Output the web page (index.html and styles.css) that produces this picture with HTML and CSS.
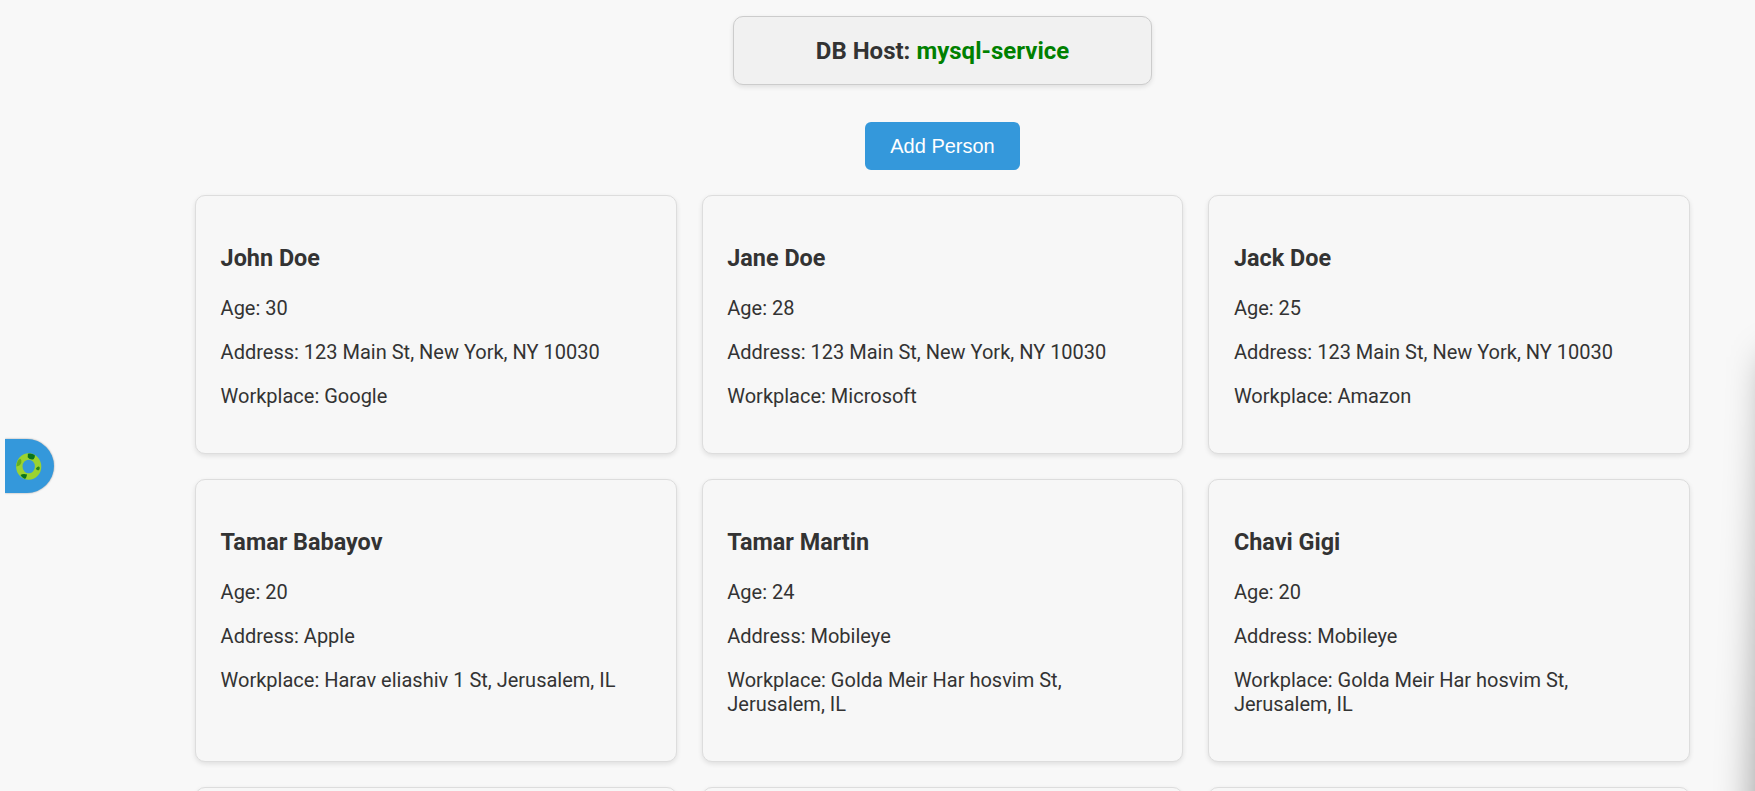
FILE: index.html
```html
<!DOCTYPE html>
<html lang="en">
<head>
<meta charset="utf-8">
<title>People</title>
<link rel="stylesheet" href="styles.css">
</head>
<body>
<main class="page">
  <div class="db-host">DB Host: <span class="db-name">mysql-service</span></div>
  <button class="add-button" type="button">Add Person</button>
  <section class="people">
    <article class="card"><h3>John Doe</h3><p>Age: 30</p><p>Address: 123 Main St, New York, NY 10030</p><p>Workplace: Google</p></article>
    <article class="card"><h3>Jane Doe</h3><p>Age: 28</p><p>Address: 123 Main St, New York, NY 10030</p><p>Workplace: Microsoft</p></article>
    <article class="card"><h3>Jack Doe</h3><p>Age: 25</p><p>Address: 123 Main St, New York, NY 10030</p><p>Workplace: Amazon</p></article>
    <article class="card"><h3>Tamar Babayov</h3><p>Age: 20</p><p>Address: Apple</p><p>Workplace: Harav eliashiv 1 St, Jerusalem, IL</p></article>
    <article class="card"><h3>Tamar Martin</h3><p>Age: 24</p><p>Address: Mobileye</p><p>Workplace: Golda Meir Har hosvim St, Jerusalem, IL</p></article>
    <article class="card"><h3>Chavi Gigi</h3><p>Age: 20</p><p>Address: Mobileye</p><p>Workplace: Golda Meir Har hosvim St, Jerusalem, IL</p></article>
    <article class="card"></article>
    <article class="card"></article>
    <article class="card"></article>
  </section>
</main>
<div class="side-tab">
  <svg width="28" height="28" viewBox="0.300 0.500 28 28">
    <ellipse cx="14" cy="14" rx="9.400" ry="10" fill="none" stroke="#9bd331" stroke-width="6.400"/>
    <path d="M13.200 1.200q4-.8 6.800 1.400.6 2.600-1.200 4.200-3.600.8-5.800-2z" fill="#08731f"/>
    <path d="M5.800 22.500q2.400-1.800 6.600-.6l-.8 2.800q-.6 1.600-1.800 1.500-2.600-.8-4-3.700z" fill="#08731f"/>
    <path d="M21.200 15.900q1.400-2 3-1.800 1.800 1.400 0 3.600-2.200.6-3-1.800z" fill="#27871d"/>
    <path d="M2.600 9.500q1-2.600 3-3.200 1.600 1 1 4-1.400 3.400-4.800 3.700z" fill="#62ae20"/>
  </svg>
</div>
<div class="edge-shadow"><div class="edge-shadow-shape"></div></div>
</body>
</html>
```

FILE: styles.css
```css
* { box-sizing: border-box; }
body {
  margin: 0;
  height: 791px;
  overflow: hidden;
  background: #f8f8f8;
  color: #333;
  font: 20px/24px Roboto, sans-serif;
}
.page {
  width: 1505px;
  height: 791px;
  margin-left: 190px;
  padding: 16px 5px 0;
  overflow: hidden;
  display: flex;
  flex-direction: column;
  align-items: center;
}
.page > * { flex-shrink: 0; }
.db-host {
  width: 419px;
  height: 69px;
  display: flex;
  justify-content: center;
  align-items: center;
  gap: 6px;
  background: #f1f1f1;
  border: 1px solid #ccc;
  border-radius: 10px;
  box-shadow: 0 2px 5px rgba(0, 0, 0, .1);
  font-size: 24px;
  font-weight: 700;
}
.db-name { color: green; }
.add-button {
  width: 155px;
  height: 48px;
  margin: 37px 0 25px;
  padding: 0;
  border: 0;
  border-radius: 6px;
  background: #3498db;
  color: #fff;
  font: 20px/24px "Liberation Sans", Arial, sans-serif;
}
.people {
  width: 100%;
  display: grid;
  grid-template-columns: repeat(3, 1fr);
  gap: 25px;
}
.card {
  min-height: 120px;
  padding: 26px 25px 24.5px 24.6px;
  background: #f7f7f7;
  border: 1px solid #ddd;
  border-radius: 10px;
  box-shadow: 0 2px 5px rgba(0, 0, 0, .1);
}
.card h3 {
  margin: 23.4px 0;
  font-size: 23.4px;
  line-height: 27.7px;
}
.card p { margin: 20px 0; }
.side-tab {
  position: fixed;
  left: 5px;
  top: 439px;
  width: 49px;
  height: 54px;
  padding: 14px 0 0 10px;
  background: #3498db;
  border-radius: 0 27px 27px 0;
  box-shadow: 0 0 2px rgba(0, 0, 0, .4);
  clip-path: inset(-3px -3px -3px 0);
}
.side-tab svg { display: block; }
.edge-shadow {
  position: fixed;
  left: 1745px;
  top: 357px;
  width: 150px;
  height: 560px;
  filter: blur(18px);
}
.edge-shadow-shape {
  width: 100%;
  height: 100%;
  background: rgba(0, 0, 0, .36);
  clip-path: polygon(22px 0, 100% 0, 100% 100%, 4px 100%);
}
```
